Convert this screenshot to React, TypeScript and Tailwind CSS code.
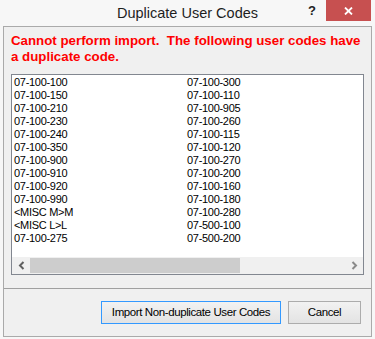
import React from 'react';

const left = [
  '07-100-100',
  '07-100-150',
  '07-100-210',
  '07-100-230',
  '07-100-240',
  '07-100-350',
  '07-100-900',
  '07-100-910',
  '07-100-920',
  '07-100-990',
  '<MISC M>M',
  '<MISC L>L',
  '07-100-275',
];

const right = [
  '07-100-300',
  '07-100-110',
  '07-100-905',
  '07-100-260',
  '07-100-115',
  '07-100-120',
  '07-100-270',
  '07-100-200',
  '07-100-160',
  '07-100-180',
  '07-100-280',
  '07-500-100',
  '07-500-200',
];

const font = { fontFamily: '"Liberation Sans", Arial, sans-serif' };

export default function App() {
  return (
    <div className="flex h-[339px] w-[375px] flex-col bg-[#f7f7f7]" style={font}>
      {/* title bar */}
      <div className="grid h-[26px] grid-cols-[1fr_auto_1fr]">
        <div />
        <div className="pt-[4px] text-[14.5px] leading-[18px] text-[#1e1e1e]">Duplicate User Codes</div>
        <div className="flex items-start justify-end pr-[4px]">
          <span className="mr-[10px] mt-[3px] text-[13px] font-bold leading-[16px] text-[#222]">?</span>
          <button className="flex h-[21px] w-[45px] items-center justify-center bg-[#c75050]">
            <svg width="9" height="8" viewBox="0 0 9 8">
              <path d="M1 0.5 L8 7.5 M8 0.5 L1 7.5" stroke="white" strokeWidth="1.8" />
            </svg>
          </button>
        </div>
      </div>

      {/* client area */}
      <div className="mx-[3px] mb-[2px] flex flex-1 flex-col border border-[#aaaaaa] bg-[#f0f0f0]">
        <p className="whitespace-pre-wrap pl-[7px] pr-[4px] pt-[6px] text-[13.3px] font-bold leading-[16px] text-[#ff0000]">
          {'Cannot perform import.  The following user codes have a duplicate code.'}
        </p>

        <div className="ml-[7px] mt-[9px] flex h-[201px] w-[353px] flex-col border border-[#828790] bg-white">
          <div className="grid flex-1 grid-cols-[173px_1fr] pl-[2px] pt-[1px] text-[11px] leading-[13px] tracking-[-0.3px] text-black">
            <div>
              {left.map((c) => (
                <div key={c}>{c}</div>
              ))}
            </div>
            <div>
              {right.map((c) => (
                <div key={c}>{c}</div>
              ))}
            </div>
          </div>
          <div className="flex h-[17px] items-stretch bg-[#f0f0f0]">
            <div className="flex w-[18px] items-center justify-center">
              <svg width="7" height="9" viewBox="0 0 7 9">
                <polyline points="5.5,1 2,4.5 5.5,8" fill="none" stroke="#606060" strokeWidth="2" />
              </svg>
            </div>
            <div className="my-[1px] w-[210px] bg-[#cdcdcd]" />
            <div className="flex-1" />
            <div className="flex w-[18px] items-center justify-center">
              <svg width="7" height="9" viewBox="0 0 7 9">
                <polyline points="1.5,1 5,4.5 1.5,8" fill="none" stroke="#8a8a8a" strokeWidth="2" />
              </svg>
            </div>
          </div>
        </div>

        <div className="mt-[13px] h-px bg-[#a0a0a0]" />

        <div className="flex justify-end gap-[7px] pr-[10px] pt-[12px]">
          <button className="h-[23px] w-[180px] border border-[#3399ff] bg-gradient-to-b from-[#f2f2f2] to-[#e3e3e3] text-[11.5px] tracking-[-0.4px] text-black">
            Import Non-duplicate User Codes
          </button>
          <button className="h-[23px] w-[73px] border border-[#acacac] bg-gradient-to-b from-[#f2f2f2] to-[#e3e3e3] text-[11.5px] tracking-[-0.4px] text-black">
            Cancel
          </button>
        </div>
      </div>
    </div>
  );
}
